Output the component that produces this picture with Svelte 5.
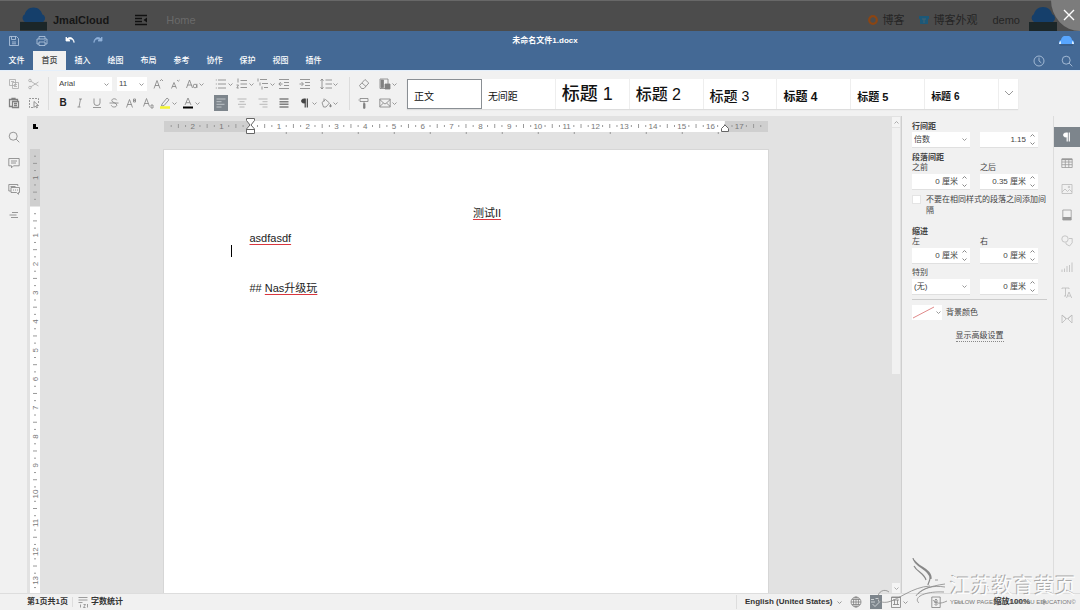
<script>
  const CM = 28.76;

  const tabs = ['文件', '首页', '插入', '绘图', '布局', '参考', '协作', '保护', '视图', '插件'];
  let activeTab = $state('首页');

  const styles = [
    { name: '正文', cls: 'body' },
    { name: '无间距', cls: 'body' },
    { name: '标题 1', cls: 'h1' },
    { name: '标题 2', cls: 'h2' },
    { name: '标题 3', cls: 'h3' },
    { name: '标题 4', cls: 'h4' },
    { name: '标题 5', cls: 'h5' },
    { name: '标题 6', cls: 'h6' },
  ];
  let activeStyle = $state('正文');

  // All icons are drawn on a 12x12 grid
  const icons = {
    save: '<path d="M1.5 1.5h7l2 2v7h-9zM3.5 1.5v3h4v-3M4 7h4M4 8.8h4"/>',
    print: '<path d="M3 4V1.5h6V4M3 9H1V4h10v5H9M3 7h6v3.5H3zM8.5 5.5h1"/>',
    undo: '<path d="M2 2v4h4L4.600 4.600C7 3 9.500 4.500 10 7.500 10.300 3.500 6 1 3.500 3.500z" fill="currentColor"/>',
    redo: '<path d="M10 2v4H6l1.400-1.400C5 3 2.500 4.500 2 7.500 1.700 3.500 6 1 8.500 3.500z" fill="currentColor"/>',
    copy: '<path d="M1.500 1.500h6v6h-6zM4.500 4.500h6v6h-6zM6 6.500h3M6 8.500h3M3 3.500h3"/>',
    cut: '<path d="M2.500 3l8 5M2.500 9l8-5"/><circle cx="2" cy="2.500" r="1.300"/><circle cx="2" cy="9.500" r="1.300"/>',
    paste: '<path d="M4 9.500H1.500v-7h8V4M4 2.500V1.500h3v1M4.500 4.500h6v6h-6zM6 6.500h3M6 8.500h3" stroke-width="1.300"/>',
    pick: '<path d="M5 10.500H1.500v-9h9V6" stroke-dasharray="2 1"/><path d="M6 4.500v6l1.500-1.500 1.200 2 .8-.5-1-2h2z"/>',
    italic: '<path d="M5 2h3M3.500 10h3M6.500 2l-1.500 8"/>',
    underline: '<path d="M3 1.500v4.500q0 2.500 3 2.500t3-2.500V1.500M2 10.500h8"/>',
    strike: '<path d="M8.700 3.200C8 1.200 3.800 1.400 3.800 3.500c0 2.600 5 1.800 5 4.600 0 2.500-5 2.500-5.500.2M1.500 6h9"/>',
    grow: '<path d="M2 10.500L5 2.500l3 8M3 7.500h4M8 3l1.500-1.500L11 3"/>',
    shrink: '<path d="M2.500 10.500L5 4.500l2.500 6M3.300 8.500h3.500M8 2l1.300 1.200L10.600 2"/>',
    casing: '<path d="M.5 10L3.500 2l3 8M1.500 7h4"/><circle cx="9" cy="8" r="1.800"/><path d="M10.900 5.800V10"/>',
    sup: '<path d="M1.500 10.500L4.500 2.500l3 8M2.500 7.500h4M8.500 2h2v3h-2zM8.500 3.500h2"/>',
    sub: '<path d="M1.500 9.500L4.500 1.500l3 8M2.500 6.500h4M9 8h2v3H9z"/>',
    marker: '<path d="M3 7l5-6 2 1.800-5 5.800-2.500.4z"/><path d="M1 10.500h10" stroke="#f5f531" stroke-width="2.500"/>',
    color: '<path d="M3 8L6 1l3 7M4 5.700h4"/><path d="M1 10.500h10" stroke="#000" stroke-width="2"/>',
    bullets: '<path d="M3 2h8M3 6h8M3 10h8M.8 2h1M.8 6h1M.8 10h1"/>',
    numbers: '<path d="M4.500 2.500H11M4.500 6H11M4.500 9.500H11M2 .5v4M.5 7h2L.8 10h2"/>',
    multi: '<path d="M3 1.500h7M5 5.500h6M7 9.500h4M1 .5v3M3 4.500v3M5 8.500v3"/>',
    outdent: '<path d="M1 1.500h10M6 4.500h5M6 7.500h5M1 10.500h10M4.500 6H1M2.800 4L.8 6l2 2"/>',
    indent: '<path d="M1 1.500h10M6 4.500h5M6 7.500h5M1 10.500h10M0.500 6H4M2.500 4l2 2-2 2"/>',
    spacing: '<path d="M5.500 2H12M5.500 6H12M5.500 10H12M2 1v10M.5 2.800L2 1l1.500 1.800M.5 9.200L2 11l1.500-1.800"/>',
    left: '<path d="M1.500 2h9M1.500 4.700h5M1.500 7.300h8M1.500 10h5"/>',
    center: '<path d="M1.500 2h9M3.500 4.700h5M2 7.300h8M3.500 10h5"/>',
    right: '<path d="M1.500 2h9M5.500 4.700h5M2.500 7.300h8M5.500 10h5"/>',
    justify: '<path d="M1.500 2h9M1.500 4.700h9M1.500 7.300h9M1.500 10h9" stroke-width="1.600"/>',
    pilcrow: '<path d="M6 2H4.500a2 2 0 0 0 0 4H6z" fill="currentColor"/><path d="M6.200 1.500V10.500M8.300 10.500V1.500" stroke-width="1.200"/>',
    bucket: '<path d="M2 5.500l3.500-3 4 3.500L6 10H3.500zM4 1.500v3M10.500 7v3" /><circle cx="10.500" cy="9" r=".8" fill="currentColor"/>',
    eraser: '<path d="M1.500 7.500L7 1.500 10.800 5 6 10.500H3.500zM4 5l4 3.500"/>',
    theme: '<path d="M1 1h8v9.500H1z"/><path d="M2 2h2.500v7.500H2zM6 6h5v5H6z" fill="currentColor"/>',
    painter: '<path d="M2 1.500h8v3H2zM1 3H.5M6 4.500v1.800" /><path d="M5.500 6.500h1.500v4.800H5.500z" fill="currentColor"/>',
    mail: '<path d="M.8 2h10.400v8H.8zM.8 2.500L4.500 6 .8 9.500M11.200 2.500L7.500 6l3.700 3.500M4.500 6L6 7l1.500-1"/>',
    clock: '<circle cx="6" cy="6" r="5"/><path d="M6 2.500V6l2.300 1.800"/>',
    search: '<circle cx="5.200" cy="5.200" r="4"/><path d="M8.200 8.200L11.300 11.300"/>',
    comment: '<path d="M.8 1.500h10.400v7.300H5.500L3.500 10.800v-2H.8zM3 4h6M3 6h5"/>',
    chat: '<path d="M.8 8V1.500h9V3M.8 8h2M3 4.500h8.500v5h-1v1.800L8.500 9.500H3zM2.500 3.500h5M5 7h1M7 7h1M9 7h1"/>',
    headings: '<path d="M4 3.500h6M1.500 6h7M3 8.500h7"/>',
    table: '<path d="M.8 2h10.400v8.500H.8zM.8 5h10.400M.8 7.700h10.400M4.300 2v8.500M7.800 2v8.500"/><path d="M.8 2.300h10.400" stroke-width="1.600"/>',
    image: '<path d="M1 1.500h10v9H1zM1 9l3-3 2.500 2.500L8.500 6.500 11 9"/><circle cx="8" cy="4" r=".8"/>',
    header: '<path d="M1.800 1h8.400v10H1.800z"/><path d="M1.800 9.500h8.400" stroke-width="3"/>',
    shape: '<circle cx="4" cy="4" r="3.200"/><path d="M8 3.500h3.200v4.300L8.500 11 5 9V7.500"/>',
    chart: '<path d="M1 11V8.500M3.500 11V7.500M6 11V5M8.500 11V4M11 11V1.500"/>',
    textart: '<path d="M1 2V1h7v1M4.500 1v8M5.500 11L8 5l2.700 6M6.500 9h3M3 9h2"/>',
    merge: '<path d="M1 2v8l4-4zM11 2v8L7 6zM1 2l5 4 5-4"/>',
    wordcount: '<path d="M1.500 1.500h9M1.500 4h9M1.500 6.500h4M3.500 8.500v3M6.500 8.500h2l-2 3h2M10.500 8v3.500"/>',
    globe: '<circle cx="6" cy="6" r="5"/><path d="M1 6h10M6 1v10M2 3.500h8M2 8.500h8"/><ellipse cx="6" cy="6" rx="2.500" ry="5"/>',
    spell: '<path d="M1 3.500h3M1 6h4M5.500 2.500h3v3M2.500 8l2.500 2.500L10.500 5"/>',
    doc: '<path d="M1.500 1h9v10.500h-9zM3 4h6M3 8.500h6M4.500 4v4.500M7.500 4v4.500M2 1.500h8"/>',
    fit: '<path d="M1.800 1h8.400v10.500H1.800zM4 6h4M6 3.500v5M4.500 4.500l1.500-1.500 1.500 1.500M4.500 8l1.500 1.500L7.500 8"/>',
    minus: '<path d="M3 6h6"/>',
    plus: '<path d="M3 6h6M6 3v6"/>',
  };

  const listTools = [
    ['bullets', '项目符号', true], ['numbers', '编号', true], ['multi', '多级列表', true],
    ['outdent', '减少缩进'], ['indent', '增加缩进'], ['spacing', '行间距', true],
    ['left', '左对齐'], ['center', '居中'], ['right', '右对齐'],
    ['justify', '两端对齐'], ['pilcrow', '非打印字符', true], ['bucket', '底纹', true],
  ];

  const leftRail = [['search', '查找'], ['comment', '批注'], ['chat', '聊天'], ['headings', '标题']];
  const rightRail = [
    ['pilcrow', '段落设置'], ['table', '表格设置'], ['image', '图像设置'], ['header', '页眉和页脚设置'],
    ['shape', '形状设置'], ['chart', '图表设置'], ['textart', '艺术字设置'], ['merge', '邮件合并'],
  ];

  // quarter-centimetre steps: number, dot, dash, dot
  function marks(from, to) {
    const out = [];
    for (let q = from * 4 + 1; q < to * 4; q++) {
      const cm = q / 4;
      if (q === 0) continue;
      const kind = q % 4 === 0 ? 'num' : q % 2 === 0 ? 'dash' : 'dot';
      out.push({ at: (cm - from) * CM, kind, label: Math.abs(cm) });
    }
    return out;
  }
  const hMarks = marks(-3, 18);
  const vMarks = marks(-2, 14);
  const tabStops = Array.from({ length: 13 }, (_, i) => 3 * CM + 36 * (i + 1));

  let lineRule = $state('倍数');
  let special = $state('(无)');
  let noSpacing = $state(false);
</script>

{#snippet icon(name)}
  <svg class="icon" viewBox="0 0 12 12" aria-hidden="true">{@html icons[name]}</svg>
{/snippet}

{#snippet caret()}
  <svg class="caret" viewBox="0 0 5 5" aria-hidden="true"><path d="M.5 1.500l2 2 2-2" /></svg>
{/snippet}

{#snippet tool(name, label, menu)}
  <button class="tool {name}" aria-label={label}>
    {@render icon(name)}
    {#if menu}{@render caret()}{/if}
  </button>
{/snippet}

{#snippet cloud()}
  <svg class="cloud" viewBox="0 0 28 24" aria-hidden="true">
    <path d="M0 15h28v9H0z" fill="#1b2628" />
    <path d="M5 15a4.500 4.500 0 0 1 0-8C6 3 9 0 14 0s8 3 9 7a4.500 4.500 0 0 1 1 8z" fill="#153f6b" />
  </svg>
{/snippet}

{#snippet spinner(label, value)}
  <span class="spinner">
    <input type="text" aria-label={label} {value} />
    <span class="arrows">
      <button aria-label="{label} +"><svg viewBox="0 0 5 5"><path d="M.5 3.500l2-2 2 2" /></svg></button>
      <button aria-label="{label} -"><svg viewBox="0 0 5 5"><path d="M.5 1.500l2 2 2-2" /></svg></button>
    </span>
  </span>
{/snippet}

<div class="app">
  <header class="site">
    {@render cloud()}
    <strong>JmalCloud</strong>
    <button class="fold" aria-label="菜单">
      <svg viewBox="0 0 12 12"><path d="M0 1.500h12M0 4.500h7M0 7.500h7M0 10.500h12" stroke="#111" stroke-width="1.500" /><path d="M12 3.500v5L8.500 6z" fill="#111" /></svg>
    </button>
    <a class="home" href="#home">Home</a>
    <nav>
      <a href="#blog">
        <svg viewBox="0 0 10 10"><circle cx="5" cy="5" r="3.800" fill="none" stroke="#8b4513" stroke-width="2.200" /></svg>博客
      </a>
      <a href="#look" class="look">
        <svg viewBox="0 0 10 10"><path d="M0 1h10v3H9v5H1V4H0z" fill="#1c5878" /><path d="M3 4h4M5 4v4" stroke="#47606c" /></svg>博客外观
      </a>
      <a href="#demo" class="user">demo</a>
      {@render cloud()}
    </nav>
    <button class="close" aria-label="关闭">
      <svg viewBox="0 0 12 12"><path d="M1 1l10 10M11 1L1 11" /></svg>
    </button>
  </header>

  <div class="title">
    <div class="quick">
      {@render tool('save', '保存')}
      {@render tool('print', '打印')}
      {@render tool('undo', '撤消')}
      {@render tool('redo', '重做')}
    </div>
    <h1>未命名文件1.docx</h1>
    <svg class="avatar" viewBox="0 0 15 10" aria-hidden="true">
      <path d="M0 8a3 3 0 0 1 2-4c1-6 10-6 11 0a3 3 0 0 1 2 4z" fill="#58a6ff" />
      <path d="M0 8a3 3 0 0 1 2-3v3zM15 8a3 3 0 0 0-2-3v3z" fill="#d8ecff" /><path d="M1 9h13" stroke="#35577d" />
    </svg>
  </div>

  <div class="tabs">
    {#each tabs as tab}
      <button class="tab" class:active={tab === activeTab} onclick={() => (activeTab = tab)}>{tab}</button>
    {/each}
    <div class="tabs-right">
      {@render tool('clock', '版本历史')}
      {@render tool('search', '搜索')}
    </div>
  </div>

  <div class="toolbar">
    <div class="group clipboard">
      {@render tool('copy', '复制')}
      {@render tool('cut', '剪切')}
      {@render tool('paste', '粘贴')}
      {@render tool('pick', '全选')}
    </div>
    <div class="group font">
      <div class="line">
        <span class="select family">
          <select aria-label="字体"><option>Arial</option></select>{@render caret()}
        </span>
        <span class="select size">
          <select aria-label="字号"><option>11</option></select>{@render caret()}
        </span>
        {@render tool('grow', '增大字号')}
        {@render tool('shrink', '减小字号')}
        {@render tool('casing', '更改大小写', true)}
      </div>
      <div class="line">
        <button class="tool bold" aria-label="加粗">B</button>
        {@render tool('italic', '斜体')}
        {@render tool('underline', '下划线')}
        {@render tool('strike', '删除线')}
        {@render tool('sup', '上标')}
        {@render tool('sub', '下标')}
        {@render tool('marker', '突出显示颜色', true)}
        {@render tool('color', '字体颜色', true)}
      </div>
    </div>
    <div class="group para">
      {#each listTools as [name, label, menu]}
        {@render tool(name, label, menu)}
      {/each}
    </div>
    <div class="group misc">
      {@render tool('eraser', '清除样式')}
      {@render tool('theme', '更改配色方案', true)}
      {@render tool('painter', '复制样式')}
      {@render tool('mail', '邮件合并', true)}
    </div>
    <div class="gallery">
      {#each styles as s}
        <button class="style {s.cls}" class:active={s.name === activeStyle} onclick={() => (activeStyle = s.name)}>{s.name}</button>
      {/each}
      <button class="more" aria-label="更多样式">
        <svg viewBox="0 0 10 6"><path d="M1 1l4 4 4-4" /></svg>
      </button>
    </div>
  </div>

  <main>
    <aside class="rail left-rail">
      {#each leftRail as [name, label]}
        {@render tool(name, label)}
      {/each}
    </aside>

    <div class="canvas">
      <div class="vruler-col">
        <span class="tab-mark"></span>
        <svg class="vruler" width="12" height="460">
          <rect width="12" height="460" fill="#fff" />
          <rect width="12" height={2 * CM} fill="#cfcfcf" />
          {#each vMarks as m}
            {#if m.kind === 'num'}
              <text x="5" y={m.at} transform="rotate(-90 5 {m.at})" dy="3">{m.label}</text>
            {:else if m.kind === 'dash'}
              <path d="M3 {m.at}h4" />
            {:else}
              <path d="M4 {m.at}h2" />
            {/if}
          {/each}
        </svg>
      </div>

      <div class="sheet-col">
        <svg class="hruler" viewBox="0 0 604 18">
          <rect y="3" width="604" height="11" fill="#cfcfcf" />
          <rect x={3 * CM} y="3" width={16.5 * CM} height="11" fill="#fff" />
          {#each hMarks as m}
            {#if m.kind === 'num'}
              <text x={m.at} y="11">{m.label}</text>
            {:else if m.kind === 'dash'}
              <path d="M{m.at} 6v4" />
            {:else}
              <path d="M{m.at} 7v2" />
            {/if}
          {/each}
          {#each tabStops as x}
            <path d="M{x} 14v2" />
          {/each}
          <path class="handle" d="M82.500 .5h8v2l-3.500 4.500 3.500 4v4.500h-8v-4.500l3.500-4-3.500-4.500zM82.500 11.500h8" />
          <path class="handle" d="M557.500 13.500v-3l3.500-3.500 3.500 3.500v3z" />
        </svg>
        <article class="page">
          <p class="centered"><u>测试II</u></p>
          <p><u>asdfasdf</u></p>
          <p></p>
          <p>## <u>Nas升级玩</u></p>
          <span class="cursor"></span>
        </article>
      </div>

      <div class="scroll">
        <button aria-label="向上滚动"><svg viewBox="0 0 5 5"><path d="M.5 3.500l2-2 2 2" /></svg></button>
        <span class="thumb"></span>
        <button class="down" aria-label="向下滚动"><svg viewBox="0 0 5 5"><path d="M.5 1.500l2 2 2-2" /></svg></button>
      </div>
    </div>

    <section class="panel">
      <h2>行间距</h2>
      <div class="pair">
        <span class="select">
          <select aria-label="行间距" bind:value={lineRule}><option>倍数</option><option>至少</option></select>{@render caret()}
        </span>
        {@render spinner('行距值', '1.15')}
      </div>
      <h2 class="spaced">段落间距</h2>
      <div class="pair labels"><span>之前</span><span>之后</span></div>
      <div class="pair">
        {@render spinner('之前', '0 厘米')}
        {@render spinner('之后', '0.35 厘米')}
      </div>
      <label class="check">
        <input type="checkbox" bind:checked={noSpacing} />
        <span>不要在相同样式的段落之间添加间隔</span>
      </label>
      <h2 class="spaced">缩进</h2>
      <div class="pair labels"><span>左</span><span>右</span></div>
      <div class="pair">
        {@render spinner('左', '0 厘米')}
        {@render spinner('右', '0 厘米')}
      </div>
      <div class="pair labels special"><span>特别</span></div>
      <div class="pair">
        <span class="select">
          <select aria-label="特别" bind:value={special}><option>(无)</option><option>首行</option></select>{@render caret()}
        </span>
        {@render spinner('特别值', '0 厘米')}
      </div>
      <hr />
      <div class="backdrop">
        <button class="swatch" aria-label="背景颜色">
          <svg viewBox="0 0 24 15"><path d="M1 13L22 2" stroke="#e08a8a" /></svg>{@render caret()}
        </button>
        <span>背景颜色</span>
      </div>
      <a class="advanced" href="#advanced">显示高级设置</a>
    </section>

    <aside class="rail right-rail">
      {#each rightRail as [name, label]}
        {@render tool(name, label)}
      {/each}
    </aside>
  </main>

  <footer>
    <span class="pages">第1页共1页</span>
    <button class="words">{@render icon('wordcount')}字数统计</button>
    <div class="status-right">
      <button class="lang">English (United States){@render caret()}</button>
      {@render tool('globe', '设置文档语言')}
      {@render tool('spell', '拼写检查')}
      {@render tool('doc', '跟踪更改', true)}
      {@render tool('fit', '适合页面')}
      {@render tool('minus', '缩小')}
      <span class="zoom">缩放100%</span>
      {@render tool('plus', '放大')}
    </div>
  </footer>

  <div class="watermark">
    <svg viewBox="0 0 72 50" aria-hidden="true">
      <path d="M35 2c1 9 17 11 17 20 0 3-2 5-2 7M36 10c3 6 10 7 12 14M36 4c5 8 18 9 17 19" stroke-width="1.200" />
      <path d="M38 40c3-6 14-10 29-12M40 38c6-6 14-9 27-7M57 24h3M11 36c-5-4-11 0-11 5s5 6 10 5c10-2 24-15 42-16M41 47c-6-5 4-12 25-11M55 44c2 4 8 4 14 1" stroke-width=".8" />
    </svg>
    <div>
      <b>江苏教育黄页</b>
      <small>YELLOW PAGES OF JIANGSU EDUCATION©</small>
    </div>
  </div>
</div>

<style>
  :global(body) {
    margin: 0;
    overflow: hidden;
  }

  .app {
    position: relative;
    display: flex;
    flex-direction: column;
    height: 100vh;
    background: #f1f1f1;
    color: #444;
    font-family: "Liberation Sans", "Noto Sans CJK SC", sans-serif;
    font-size: 8px;
    line-height: 10px;
  }

  button, select, input {
    margin: 0;
    padding: 0;
    border: none;
    background: none;
    color: inherit;
    font: inherit;
    border-radius: 0;
  }

  svg {
    fill: none;
    stroke: currentColor;
  }

  h1, h2, p {
    margin: 0;
    font-size: inherit;
  }

  a {
    color: inherit;
    text-decoration: none;
  }

  .icon {
    width: 12px;
    height: 12px;
    flex: none;
    stroke-width: 0.8;
  }

  .caret {
    width: 5px;
    height: 5px;
    flex: none;
    color: #999;
  }

  .tool {
    display: flex;
    align-items: center;
    gap: 1px;
    height: 14px;
    color: #808080;
  }

  /* Site header behind the editor */
  .site {
    display: flex;
    align-items: center;
    box-sizing: border-box;
    height: 31px;
    padding: 8px 22px 0 20px;
    border-top: 1px solid #686868;
    background: #4c4c4c;
    color: #222;
    font-size: 11px;
  }

  .site strong {
    margin-left: 6px;
    color: #161616;
  }

  .cloud {
    width: 27px;
    height: 24px;
    margin-top: -2px;
    stroke: none;
  }

  .fold {
    width: 12px;
    height: 12px;
    margin: 0 19px 0 26px;
  }

  .fold svg {
    display: block;
    stroke: none;
  }

  .home {
    color: #6a6a6a;
  }

  .site nav {
    display: flex;
    align-items: center;
    gap: 15px;
    margin-left: auto;
    color: #252525;
  }

  .site nav a {
    display: flex;
    align-items: center;
    gap: 4px;
  }

  .site nav a svg {
    width: 10px;
    height: 10px;
    stroke: none;
  }

  .site nav .cloud {
    width: 30px;
    margin-left: -7px;
  }

  .close {
    position: absolute;
    top: 0;
    right: 0;
    width: 29px;
    height: 31px;
    background: #7c7c7c;
    border-bottom-left-radius: 29px 31px;
    color: #fff;
  }

  .close svg {
    display: block;
    width: 12px;
    height: 12px;
    margin: -2px 0 0 12px;
    stroke-width: 1.4;
  }

  /* Editor title and tabs */
  .title {
    display: grid;
    grid-template-columns: 1fr auto 1fr;
    align-items: center;
    height: 20px;
    padding: 0 6px 0 8px;
    background: #446995;
    color: #fff;
  }

  .quick {
    display: flex;
    gap: 16px;
  }

  .quick .tool,
  .tabs-right .tool {
    color: #b9cbe2;
  }

  .quick .undo {
    color: #fff;
  }

  .quick .redo {
    color: #8fb0d8;
  }

  .title h1 {
    padding-left: 8px;
    font-weight: bold;
  }

  .avatar {
    width: 15px;
    height: 10px;
    justify-self: end;
    stroke: none;
  }

  .tabs {
    display: flex;
    height: 19px;
    background: #446995;
  }

  .tab {
    width: 33px;
    color: #fff;
    font-weight: 500;
  }

  .tab.active {
    background: #f1f1f1;
    color: #444;
  }

  .tabs-right {
    display: flex;
    align-items: center;
    gap: 16px;
    margin-left: auto;
    padding-right: 7px;
  }

  /* Toolbar */
  .toolbar {
    display: flex;
    align-items: center;
    height: 46px;
    border-top: 1px solid #e4effb;
    box-sizing: border-box;
  }

  .group {
    display: grid;
    row-gap: 5px;
    box-sizing: border-box;
  }

  .clipboard {
    grid-template-columns: 20px 20px;
    padding-left: 8px;
    border-right: 1px solid #dcdcdc;
  }

  .copy, .cut {
    color: #aaa;
  }

  .font {
    padding: 0 11px 0 8px;
  }

  .line {
    display: flex;
    gap: 5px;
  }

  .bold {
    justify-content: center;
    width: 12px;
    color: #222;
    font-size: 10px;
    font-weight: bold;
  }

  .select {
    display: flex;
    align-items: center;
    box-sizing: border-box;
    height: 14px;
    padding: 0 3px 0 2px;
    background: #fff;
  }

  .select select {
    flex: 1;
    min-width: 0;
    appearance: none;
    outline: none;
  }

  .family {
    width: 55px;
  }

  .size {
    width: 30px;
  }

  .para {
    grid-template-columns: repeat(6, 21px);
    padding-right: 8px;
    border-right: 1px solid #dcdcdc;
  }

  .para .left {
    width: 12px;
    background: #7d858c;
    color: #cfd4d8;
    outline: 1px solid #7d858c;
    outline-offset: 0;
  }

  .para .center,
  .para .right {
    color: #aaa;
  }

  .para .pilcrow {
    color: #444;
  }

  .misc {
    grid-template-columns: 21px 21px;
    padding: 0 7px 0 8px;
  }

  .gallery {
    display: flex;
    flex: 1;
    max-width: 611px;
    height: 30px;
    background: #fff;
    box-shadow: 0 1px 1px #ddd;
  }

  .style {
    display: flex;
    flex: 1;
    align-items: flex-end;
    box-sizing: border-box;
    padding: 0 6px 7px;
    border-right: 1px solid #eee;
    color: #111;
    white-space: nowrap;
  }

  .style.active {
    padding-bottom: 6px;
    border: 1px solid #8a8f94;
  }

  .style.body { font-size: 10px; }
  .style.h1 { padding-bottom: 10px; font-size: 18px; font-weight: 500; }
  .style.h2 { padding-bottom: 9px; font-size: 16px; font-weight: 500; }
  .style.h3 { padding-bottom: 8px; font-size: 14px; font-weight: 500; }
  .style.h4 { font-size: 12px; font-weight: bold; }
  .style.h5 { font-size: 11px; font-weight: bold; }
  .style.h6 { font-size: 10px; font-weight: bold; }

  .more {
    width: 19px;
    color: #999;
  }

  .more svg {
    width: 10px;
    height: 6px;
  }

  /* Work area */
  main {
    display: flex;
    flex: 1;
    min-height: 0;
  }

  .rail {
    display: flex;
    flex-direction: column;
    align-items: center;
    flex: none;
    width: 27px;
    box-sizing: border-box;
  }

  .left-rail {
    gap: 12px;
    padding-top: 14px;
  }

  .right-rail {
    gap: 6px;
    padding-top: 11px;
    border-left: 1px solid #ddd;
  }

  .right-rail .tool {
    justify-content: center;
    width: 100%;
    height: 20px;
    color: #bbb;
  }

  .right-rail .pilcrow {
    background: #7d858c;
    color: #fff;
  }

  .right-rail .table,
  .right-rail .header {
    color: #999;
  }

  .canvas {
    display: flex;
    flex: 1;
    min-width: 0;
    background: #e2e2e2;
    overflow: hidden;
  }

  .vruler-col {
    display: flex;
    flex-direction: column;
    flex: none;
    gap: 20px;
    width: 10px;
    padding: 8px 0 0 3px;
  }

  .tab-mark {
    flex: none;
    width: 2px;
    height: 3px;
    margin-left: 3px;
    border: solid #000;
    border-width: 0 0 2px 3px;
  }

  .vruler {
    flex: none;
    width: 10px;
  }

  .vruler,
  .hruler {
    stroke: #999;
  }

  .vruler rect,
  .hruler rect {
    stroke: none;
  }

  .vruler text,
  .hruler text {
    fill: #777;
    stroke: none;
    font-size: 8px;
    text-anchor: middle;
  }

  .hruler .handle {
    fill: #fff;
    stroke: #666;
  }

  .sheet-col {
    display: flex;
    flex: 1;
    flex-direction: column;
    align-items: center;
    min-width: 0;
    padding: 2px 1px 0 0;
  }

  .hruler {
    flex: none;
    width: 100%;
    max-width: 604px;
    margin-bottom: 14px;
  }

  .page {
    position: relative;
    flex: 1;
    box-sizing: border-box;
    width: 100%;
    max-width: 604px;
    padding: 51px 43px 0 86px;
    background: #fff;
    box-shadow: 0 0 0 1px #d6d6d6;
    color: #222;
    font-size: 11px;
    line-height: 25px;
  }

  .page p {
    height: 25px;
  }

  .centered {
    text-align: center;
  }

  .page u {
    text-decoration: underline #d9363e 1px;
    text-underline-offset: 2px;
  }

  .cursor {
    position: absolute;
    top: 95px;
    left: 67px;
    width: 1px;
    height: 12px;
    background: #000;
  }

  .scroll {
    display: flex;
    flex-direction: column;
    width: 8px;
    padding: 1px 1px 0 0;
    border-right: 1px solid #cfcfcf;
  }

  .scroll button {
    display: flex;
    align-items: center;
    justify-content: center;
    height: 10px;
    background: #f4f4f4;
    color: #aaa;
  }

  .scroll svg {
    width: 5px;
    height: 5px;
  }

  .thumb {
    height: 246px;
    margin-top: 1px;
    background: #f1f1f1;
  }

  .down {
    margin-top: auto;
  }

  /* Paragraph panel */
  .panel {
    flex: none;
    width: 151px;
    box-sizing: border-box;
    padding: 6px 6px 0 10px;
  }

  .panel h2 {
    font-weight: bold;
  }

  .panel .spaced {
    margin-top: 6px;
  }

  .pair {
    display: grid;
    grid-template-columns: 58px 58px;
    column-gap: 10px;
  }

  .labels {
    height: 11px;
  }

  .special {
    margin-top: 5px;
  }

  .panel .select,
  .spinner {
    height: 15px;
    background: #fff;
    box-shadow: 0 1px 0 #e0e0e0;
  }

  .spinner {
    display: flex;
    min-width: 0;
  }

  .spinner input {
    flex: 1;
    width: 0;
    text-align: right;
    outline: none;
  }

  .arrows {
    display: flex;
    flex-direction: column;
    justify-content: space-between;
    width: 12px;
    color: #888;
  }

  .arrows button {
    display: flex;
    justify-content: center;
    padding: 1px 0;
  }

  .arrows svg {
    width: 5px;
    height: 5px;
  }

  .check {
    display: flex;
    gap: 5px;
    margin-top: 5px;
    line-height: 11px;
  }

  .check input {
    flex: none;
    appearance: none;
    width: 9px;
    height: 9px;
    background: #fff;
    border: 1px solid #e4e4e4;
    box-sizing: border-box;
    margin-top: 1px;
  }

  .check + .spaced {
    margin-top: 11px;
  }

  hr {
    margin: 5px 0;
    border: none;
    border-top: 1px solid #ccc;
  }

  .backdrop {
    display: flex;
    align-items: center;
    gap: 4px;
  }

  .swatch {
    display: flex;
    align-items: center;
    width: 30px;
    height: 15px;
    background: #fff;
  }

  .swatch svg:first-child {
    width: 24px;
    height: 15px;
  }

  .advanced {
    display: block;
    width: max-content;
    margin: 11px auto 0;
    border-bottom: 1px dotted #888;
  }

  /* Status bar */
  footer {
    display: flex;
    align-items: center;
    flex: none;
    height: 17px;
    box-sizing: border-box;
    padding-left: 27px;
    border-top: 1px solid #ddd;
    color: #333;
    font-weight: bold;
  }

  .pages {
    padding-right: 4px;
    border-right: 1px solid #ddd;
  }

  .words {
    display: flex;
    align-items: center;
    gap: 2px;
    padding-left: 4px;
    color: #333;
  }

  .words .icon {
    color: #888;
  }

  .status-right {
    display: flex;
    align-items: center;
    gap: 8px;
    margin-left: auto;
    padding: 0 30px 0 8px;
    border-left: 1px solid #ddd;
  }

  .lang {
    display: flex;
    align-items: center;
    gap: 4px;
  }

  .status-right .spell {
    background: #7d858c;
    color: #dfe3e6;
  }

  .status-right .fit {
    margin-left: 14px;
  }

  .status-right .minus {
    margin-left: 4px;
  }

  .zoom {
    margin-left: 20px;
  }

  /* Publisher mark in the corner */
  .watermark {
    position: absolute;
    right: 4px;
    bottom: 4px;
    display: flex;
    align-items: flex-end;
    pointer-events: none;
  }

  .watermark svg {
    width: 72px;
    height: 50px;
    color: #888;
  }

  .watermark div {
    display: flex;
    flex-direction: column;
  }

  .watermark b {
    color: #fbfbfb;
    font-size: 21px;
    font-weight: 400;
    line-height: 24px;
    text-shadow: -1px -1px 0 #a8a8a8;
  }

  .watermark small {
    color: #777;
    font-size: 6px;
    line-height: 8px;
    white-space: nowrap;
  }
</style>
